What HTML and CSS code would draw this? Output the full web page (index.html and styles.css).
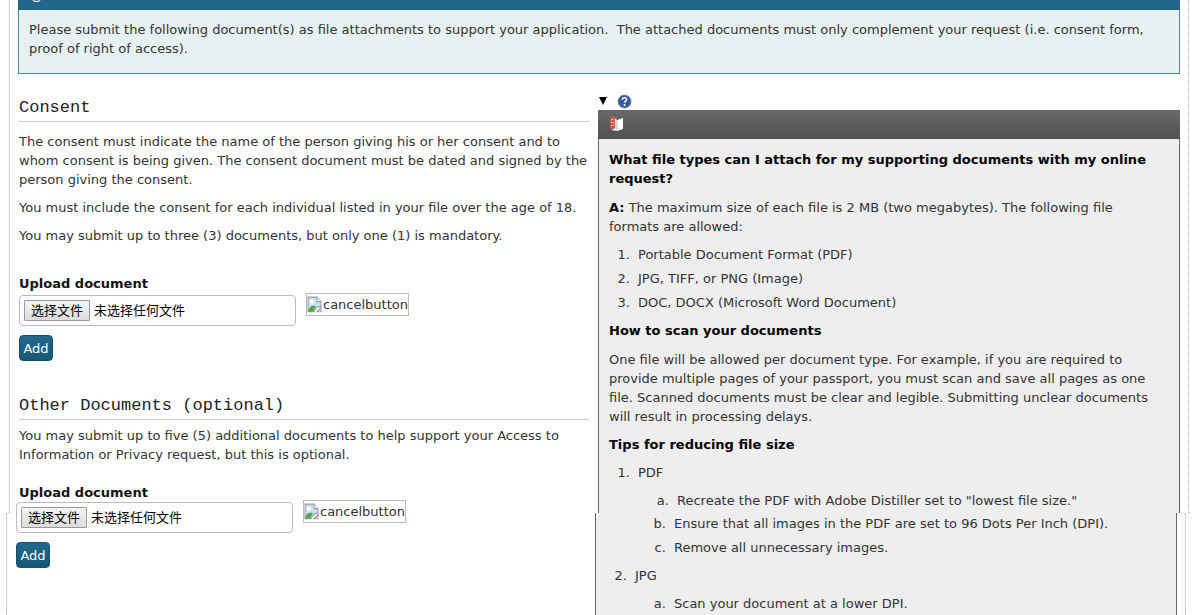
FILE: index.html
```html
<!DOCTYPE html>
<html lang="en">
<head>
<meta charset="utf-8">
<title>Supporting documents</title>
<link rel="stylesheet" href="styles.css">
</head>
<body>
<main class="page">
  <div class="band upper">
    <section class="notice">
      <div class="notice-bar"><svg width="10" height="3" viewBox="0 0 10 3" aria-hidden="true"><path d="M1 0C2 2 7 2 8 0" fill="none" stroke="#dbe8ef" stroke-width="1.300"/></svg></div>
      <p>Please submit the following document(s) as file attachments to support your application.&nbsp; The attached documents must only complement your request (i.e. consent form, proof of right of access).</p>
    </section>
    <div class="columns">
      <section class="forms">
        <h2>Consent</h2>
        <p>The consent must indicate the name of the person giving his or her consent and to whom consent is being given. The consent document must be dated and signed by the person giving the consent.</p>
        <p>You must include the consent for each individual listed in your file over the age of 18.</p>
        <p>You may submit up to three (3) documents, but only one (1) is mandatory.</p>
        <label class="caption" for="consent-file">Upload document</label>
        <div class="upload">
          <div class="field">
            <input type="file" id="consent-file">
            <span class="choose" lang="zh">选择文件</span>
            <span lang="zh">未选择任何文件</span>
          </div>
          <a class="cancel" href="#"><svg width="16" height="18" viewBox="0 0 16 16" preserveAspectRatio="none" aria-hidden="true"><path d="M1 1h9l4 4v4l-4 1-3 4H1z" fill="#cbdff2" stroke="#999"/><path d="M10 1v4h4" fill="#fff" stroke="#999"/><circle cx="5" cy="5" r="2" fill="#fff"/><path d="M1 14c1-5 5-6 8-5l-3 5z" fill="#51a648"/><path d="M10 14l4-4v4z" fill="#d9e7f5" stroke="#999"/></svg>cancelbutton</a>
        </div>
        <button class="add" type="button">Add</button>
        <h2 class="second">Other Documents (optional)</h2>
        <p class="tight">You may submit up to five (5) additional documents to help support your Access to Information or Privacy request, but this is optional.</p>
        <label class="caption" for="other-file">Upload document</label>
      </section>
      <aside class="help">
        <div class="toggle">
          <svg width="10" height="8" viewBox="0 0 10 8" aria-hidden="true"><path d="M1 0h8L5 8z" fill="#000"/></svg>
          <svg width="15" height="15" viewBox="0 0 15 15" role="img" aria-label="Help"><circle cx="7.500" cy="7.500" r="6.500" fill="#3a5899" stroke="#7188b8"/><path d="M5.300 5.800C5.300 3.200 9.700 3.200 9.700 5.600C9.700 7.200 7.500 7 7.500 8.800" fill="none" stroke="#fff" stroke-width="1.500"/><circle cx="7.500" cy="11" r="1" fill="#fff"/></svg>
        </div>
        <div class="panel">
          <div class="panel-bar">
            <svg width="14" height="16" viewBox="0 0 14 16" aria-hidden="true"><path d="M0 1l5-1v12l-5 1z" fill="#c75a4b"/><path d="M1 4l3-1M1 7l3-1M1 10l3-1" stroke="#efb6a4"/><path d="M5 2l2 2v11l-6-1 4-2z" fill="#e1e7ec"/><path d="M7 4l6-2v11l-6 2z" fill="#fff"/><path d="M7 4v11" stroke="#b7c5cf"/></svg>
          </div>
          <h3>What file types can I attach for my supporting documents with my online request?</h3>
          <p><strong>A:</strong> The maximum size of each file is 2 MB (two megabytes). The following file formats are allowed:</p>
          <ol>
            <li>Portable Document Format (PDF)</li>
            <li>JPG, TIFF, or PNG (Image)</li>
            <li>DOC, DOCX (Microsoft Word Document)</li>
          </ol>
          <h3>How to scan your documents</h3>
          <p>One file will be allowed per document type. For example, if you are required to provide multiple pages of your passport, you must scan and save all pages as one file. Scanned documents must be clear and legible. Submitting unclear documents will result in processing delays.</p>
          <h3>Tips for reducing file size</h3>
          <ol>
            <li>PDF
              <ol class="alpha">
                <li>Recreate the PDF with Adobe Distiller set to "lowest file size."</li>
              </ol>
            </li>
          </ol>
        </div>
      </aside>
    </div>
  </div>
  <div class="band lower">
    <div class="columns">
      <section class="forms">
        <div class="upload">
          <div class="field">
            <input type="file" id="other-file">
            <span class="choose" lang="zh">选择文件</span>
            <span lang="zh">未选择任何文件</span>
          </div>
          <a class="cancel" href="#"><svg width="16" height="18" viewBox="0 0 16 16" preserveAspectRatio="none" aria-hidden="true"><path d="M1 1h9l4 4v4l-4 1-3 4H1z" fill="#cbdff2" stroke="#999"/><path d="M10 1v4h4" fill="#fff" stroke="#999"/><circle cx="5" cy="5" r="2" fill="#fff"/><path d="M1 14c1-5 5-6 8-5l-3 5z" fill="#51a648"/><path d="M10 14l4-4v4z" fill="#d9e7f5" stroke="#999"/></svg>cancelbutton</a>
        </div>
        <button class="add" type="button">Add</button>
      </section>
      <aside class="help">
        <div class="panel">
          <ol class="alpha continued" start="2">
            <li>Ensure that all images in the PDF are set to 96 Dots Per Inch (DPI).</li>
            <li>Remove all unnecessary images.</li>
          </ol>
          <ol start="2">
            <li>JPG
              <ol class="alpha">
                <li>Scan your document at a lower DPI.</li>
              </ol>
            </li>
          </ol>
        </div>
      </aside>
    </div>
  </div>
</main>
</body>
</html>
```
FILE: styles.css
```css
* { box-sizing: border-box; }
body {
  margin: 0;
  background: #fff;
  color: #333;
  font: 13px/19px "DejaVu Sans", Verdana, sans-serif;
  overflow: hidden;
}
p, h2, h3, ol { margin: 0; }
.band {
  margin: 0 11px 0 9px;
  padding: 0 8px;
  border: 1px dotted #aaa;
  border-width: 0 1px;
}
.lower { margin: 0 14px 0 6px; }
.notice {
  border: 1px solid #4c8aa5;
  border-top: 0;
  background: #e8f1f2;
}
.notice-bar { height: 10px; margin: 0 -1px; padding-left: 14px; background: #22678a; }
.notice-bar svg { display: block; }
.notice p { padding: 10px 24px 15px 10px; }
.columns { display: grid; grid-template-columns: 571px minmax(0, 1fr); column-gap: 9px; }
.forms { padding-left: 1px; }
h2 {
  margin-top: 22px;
  padding-bottom: 2px;
  border-bottom: 1px solid #ccc;
  font: 17px/23px "Liberation Mono", monospace;
  color: #222;
}
.forms p { margin-top: 9px; }
.forms h2 + p { margin-top: 10px; }
.forms p.tight { margin-top: 6px; }
.caption { display: block; margin-top: 29px; font-weight: bold; color: #111; }
.tight + .caption { margin-top: 19px; }
.upload { display: flex; align-items: flex-start; gap: 10px; margin-top: 2px; }
.field {
  position: relative;
  display: flex;
  align-items: center;
  gap: 4px;
  width: 277px;
  height: 31px;
  padding: 0 4px;
  border: 1px solid #bbb;
  border-radius: 4px;
  background: #fff;
  color: #000;
  font: 13px/19px "Liberation Sans", "Noto Sans CJK SC", sans-serif;
}
.field input { position: absolute; inset: 0; width: 100%; opacity: 0; }
.choose {
  width: 66px;
  border: 1px solid #999;
  border-radius: 1px;
  background: linear-gradient(#f5f5f5, #dcdcdc);
  text-align: center;
}
.cancel {
  display: flex;
  align-items: center;
  margin-top: -2px;
  height: 23px;
  border: 1px solid #bbb;
  color: #333;
  text-decoration: none;
}
.add {
  display: block;
  width: 34px;
  height: 26px;
  margin-top: 9px;
  padding: 0;
  border: 1px solid #14506e;
  border-radius: 4px;
  background: linear-gradient(#20698d, #165775);
  color: #fff;
  font: inherit;
}
.second { margin-top: 33px; }
.toggle { display: flex; align-items: center; gap: 9px; height: 36px; padding-top: 18px; }
.panel {
  height: 403px;
  border: 1px solid #666;
  border-width: 0 1px;
  background: #eee;
}
.panel-bar {
  height: 29px;
  margin: 0 -1px;
  padding: 6px 12px;
  background: linear-gradient(#6b6869, #515052);
}
.panel-bar svg { display: block; }
.panel h3, .panel p { margin: 10px 20px 0 10px; font-size: 13px; }
.panel h3 { margin-top: 9px; color: #000; }
.panel strong { color: #111; }
.panel .panel-bar + h3 { margin-top: 11px; }
ol { padding-left: 35px; }
li { padding-left: 4px; }
.panel > ol { margin-top: 9px; }
.panel li + li { margin-top: 5px; }
.panel ol ol { margin-top: 9px; }
ol.alpha { list-style: lower-alpha; }
.lower .panel { height: auto; min-height: 110px; padding-top: 1px; }
.panel > .continued { margin-top: 0; padding-left: 74px; }
.lower .upload { margin-top: -11px; }
```
